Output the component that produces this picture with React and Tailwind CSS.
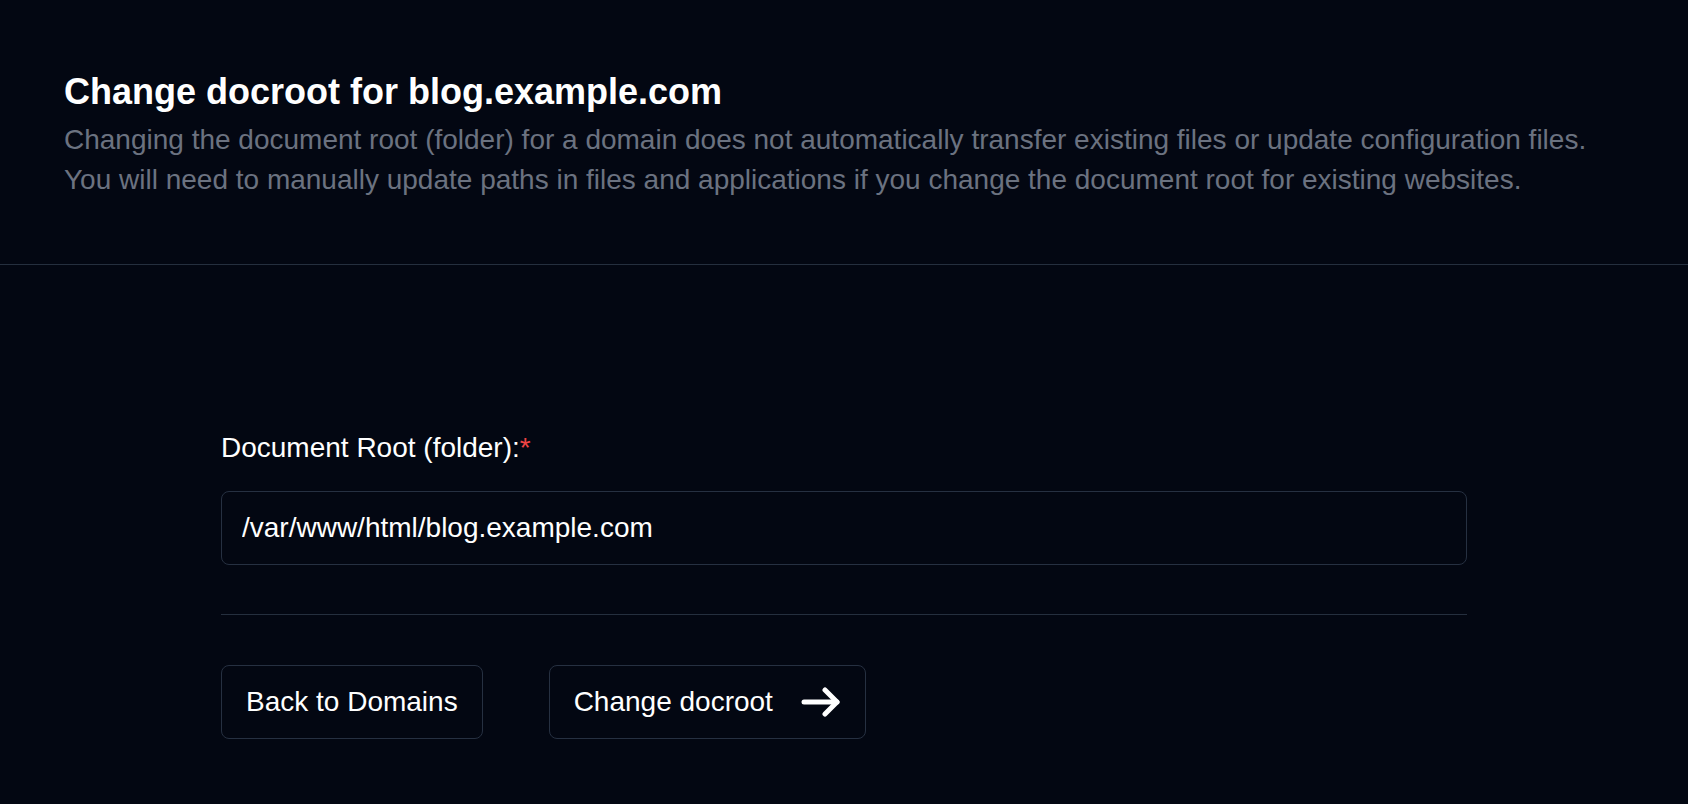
import React from "react";

function ArrowRight() {
  return (
    <svg width="40" height="30" viewBox="0 0 40 30" fill="none" aria-hidden="true">
      <path d="M3 15H36" stroke="white" strokeWidth="5" strokeLinecap="round" />
      <path d="M24 3L36 15L24 27" stroke="white" strokeWidth="5" strokeLinecap="round" strokeLinejoin="round" />
    </svg>
  );
}

export default function App() {
  return (
    <div className="min-h-screen w-full bg-[#030712] font-['Liberation_Sans',Arial,sans-serif]">
      <header className="border-b border-[#252f3e] px-[64px] pt-[72px] pb-[64px]">
        <h1 className="text-[36px] font-bold leading-[40px] text-white">
          Change docroot for blog.example.com
        </h1>
        <p className="mt-2 text-[28px] leading-[40px] text-[#6b7280]">
          Changing the document root (folder) for a domain does not automatically transfer existing files or update configuration files.
          <br />
          You will need to manually update paths in files and applications if you change the document root for existing websites.
        </p>
      </header>
      <main className="pt-[163px]">
        <div className="mx-auto w-[1246px]">
          <label className="block text-[28px] leading-[40px] text-white">
            Document Root (folder):<span className="text-[#ef4444]">*</span>
          </label>
          <input
            type="text"
            readOnly
            defaultValue="/var/www/html/blog.example.com"
            className="mt-[23px] block w-full rounded-lg border border-[#263041] bg-transparent px-5 py-4 text-[28px] leading-[40px] text-white outline-none"
          />
          <div className="mt-[49px] h-px bg-[#252f3e]" />
          <div className="mt-[50px] flex gap-[66px]">
            <button className="rounded-lg border border-[#263041] px-6 py-4 text-[28px] leading-[40px] text-white">
              Back to Domains
            </button>
            <button className="flex items-center gap-[28px] rounded-lg border border-[#263041] px-6 py-4 text-[28px] leading-[40px] text-white">
              <span>Change docroot</span>
              <ArrowRight />
            </button>
          </div>
        </div>
      </main>
    </div>
  );
}
